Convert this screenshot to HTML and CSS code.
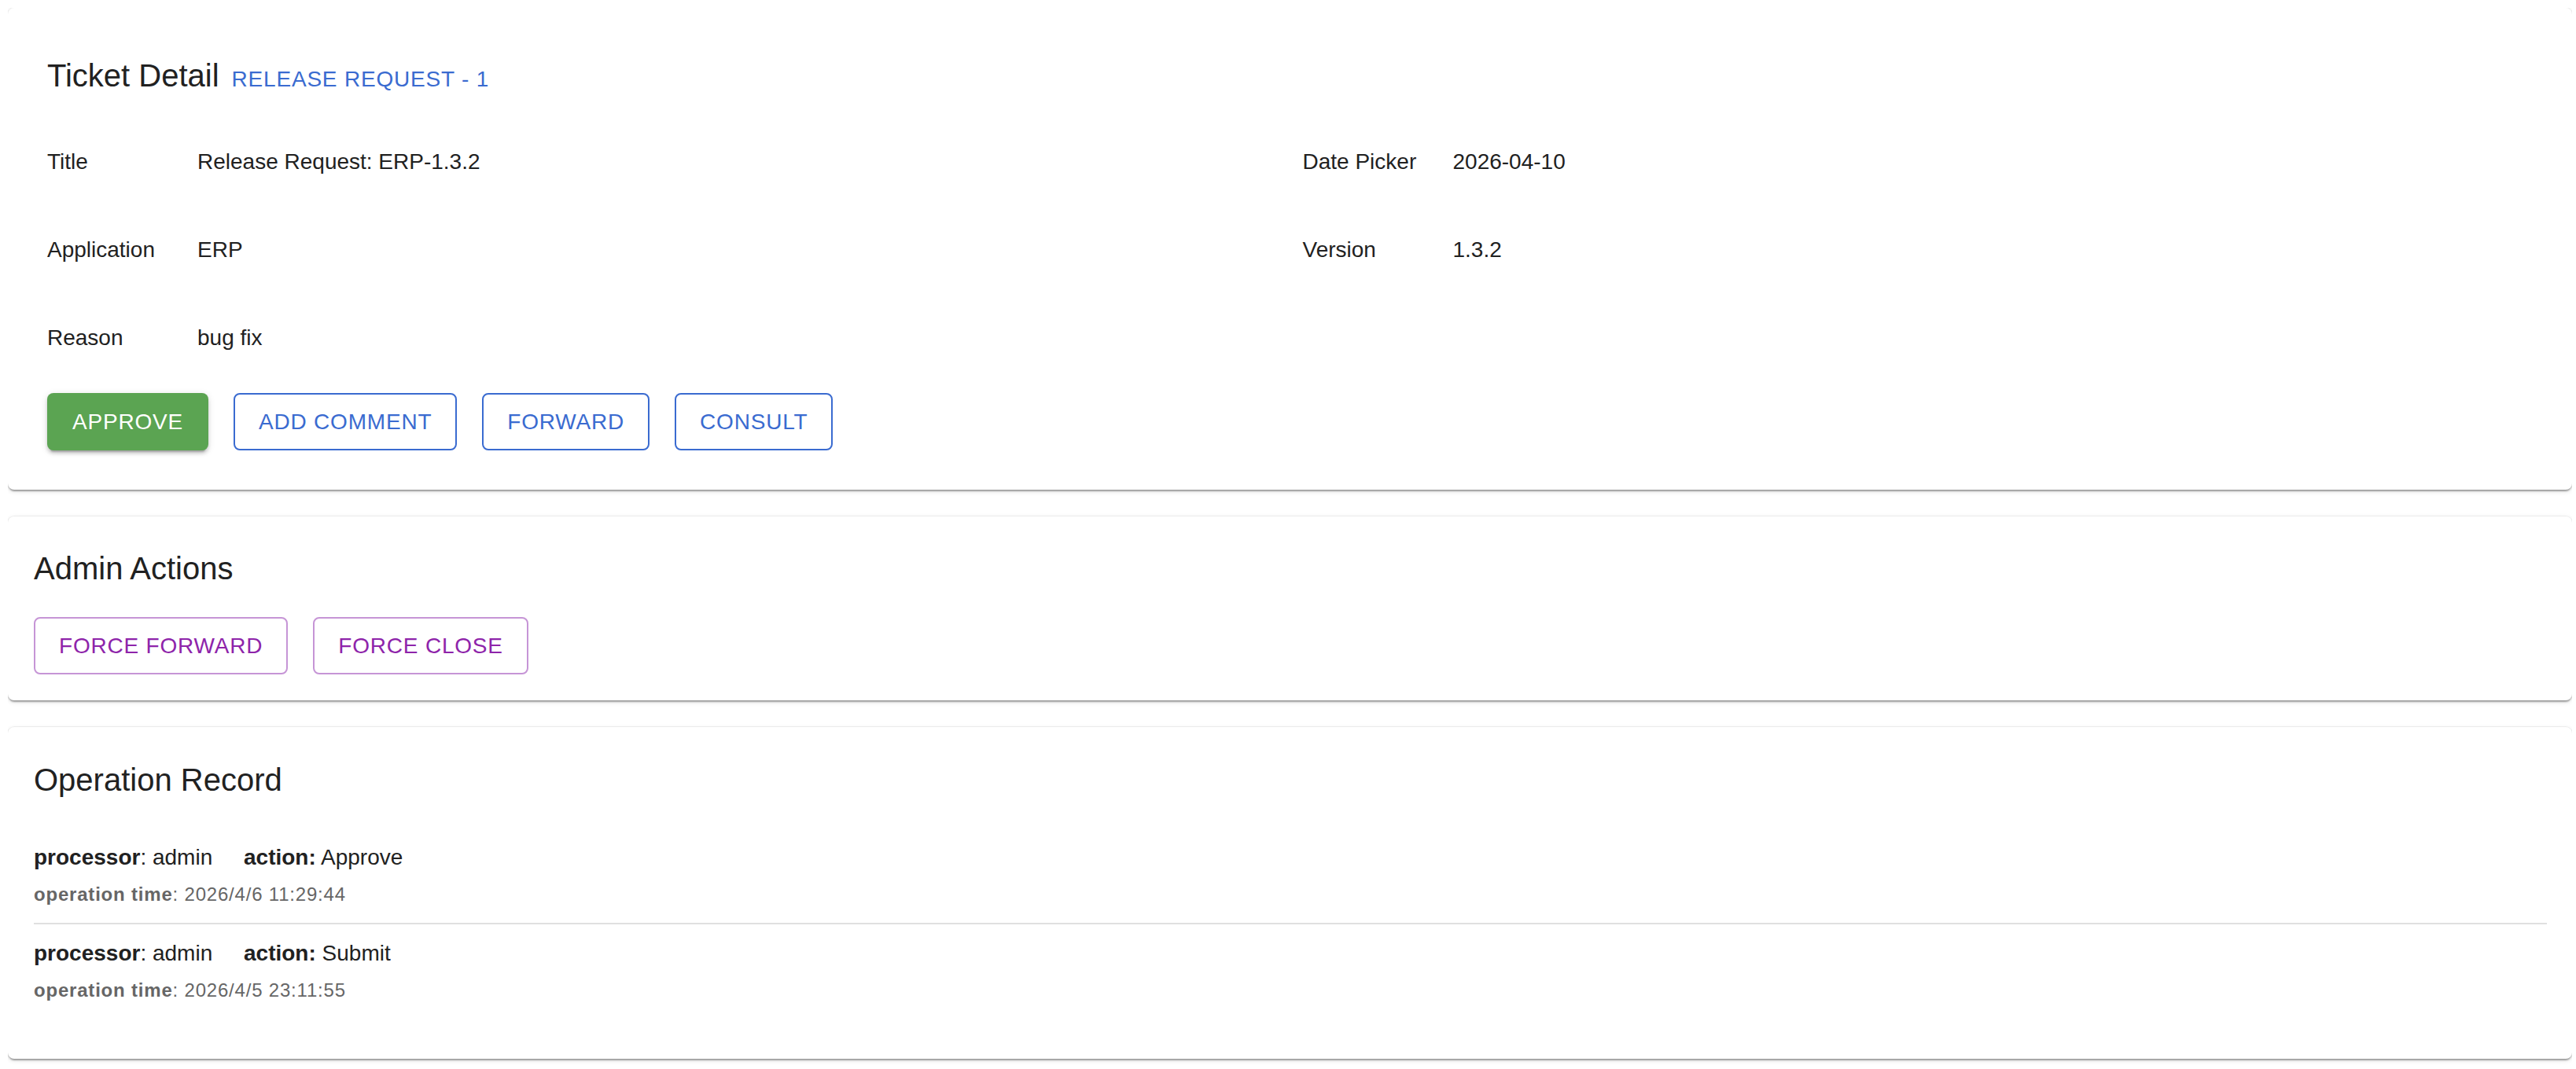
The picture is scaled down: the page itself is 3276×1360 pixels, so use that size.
FILE: index.html
```html
<!DOCTYPE html>
<html lang="en">
<head>
  <meta charset="UTF-8">
  <title>Ticket Detail</title>
  <link rel="stylesheet" href="styles.css">
</head>
<body>

<div class="card card-detail">
  <div class="card-head">
    <h2 class="card-title">Ticket Detail</h2>
    <span class="ticket-no">Release Request - 1</span>
  </div>

  <div class="field-grid">
    <div class="field">
      <span class="field-label">Title</span>
      <span class="field-value">Release Request: ERP-1.3.2</span>
    </div>
    <div class="field">
      <span class="field-label">Date Picker</span>
      <span class="field-value">2026-04-10</span>
    </div>
    <div class="field">
      <span class="field-label">Application</span>
      <span class="field-value">ERP</span>
    </div>
    <div class="field">
      <span class="field-label">Version</span>
      <span class="field-value">1.3.2</span>
    </div>
    <div class="field">
      <span class="field-label">Reason</span>
      <span class="field-value">bug fix</span>
    </div>
  </div>

  <div class="btn-row">
    <button class="btn btn-approve">Approve</button>
    <button class="btn btn-outline">Add Comment</button>
    <button class="btn btn-outline">Forward</button>
    <button class="btn btn-outline">Consult</button>
  </div>
</div>

<div class="card card-admin">
  <h2 class="card-title admin-title">Admin Actions</h2>
  <div class="btn-row">
    <button class="btn btn-outline btn-purple">Force Forward</button>
    <button class="btn btn-outline btn-purple">Force Close</button>
  </div>
</div>

<div class="card card-record">
  <h2 class="card-title record-title">Operation Record</h2>
  <ul class="record-list">
    <li class="record-item">
      <div class="record-main">
        <span><b>processor</b>: admin</span>
        <span class="record-action"><b>action:</b> Approve</span>
      </div>
      <div class="record-time"><b>operation time</b>: 2026/4/6 11:29:44</div>
    </li>
    <li class="record-divider"></li>
    <li class="record-item">
      <div class="record-main">
        <span><b>processor</b>: admin</span>
        <span class="record-action"><b>action:</b> Submit</span>
      </div>
      <div class="record-time"><b>operation time</b>: 2026/4/5 23:11:55</div>
    </li>
  </ul>
</div>

</body>
</html>
```

FILE: styles.css
```css
body {
  margin: 10px 5px 10px 10px;
  font-family: 'Liberation Sans', Arial, sans-serif;
  color: #212121;
  background-color: #fff;
}

.card {
  background-color: #fff;
  border-radius: 8px;
  box-shadow: 0 0 0 1px rgba(0, 0, 0, 0.05), 0 4px 2px -2px rgba(0, 0, 0, 0.2), 0 2px 2px 0 rgba(0, 0, 0, 0.14), 0 2px 6px 0 rgba(0, 0, 0, 0.12);
  margin-bottom: 34px;
}

.card-title {
  margin: 0;
  font-size: 40px;
  font-weight: 400;
  line-height: 64px;
  color: #212121;
}

/* ticket detail */
.card-detail {
  padding: 54px 50px 50px 50px;
}
.card-head {
  display: flex;
  align-items: baseline;
  gap: 16px;
  margin-bottom: 22px;
}
.ticket-no {
  font-size: 28px;
  letter-spacing: 0.8px;
  text-transform: uppercase;
  color: #3a6bd0;
}
.field-grid {
  display: grid;
  grid-template-columns: 1fr 1fr;
  column-gap: 32px;
}
.field {
  display: flex;
  align-items: center;
  height: 112px;
  font-size: 28px;
}
.field-label {
  width: 191px;
  flex-shrink: 0;
}

/* buttons */
.btn-row {
  display: flex;
  gap: 32px;
  margin-top: 14px;
}
.btn {
  font-family: 'Liberation Sans', Arial, sans-serif;
  font-size: 28px;
  line-height: 49px;
  letter-spacing: 0.8px;
  text-transform: uppercase;
  border-radius: 8px;
  cursor: pointer;
}
.btn-approve {
  padding: 12px 32px;
  border: none;
  background-color: #5ba452;
  color: #fff;
  box-shadow: 0 6px 2px -4px rgba(0, 0, 0, 0.2), 0 4px 4px 0 rgba(0, 0, 0, 0.14), 0 2px 10px 0 rgba(0, 0, 0, 0.12);
}
.btn-outline {
  padding: 10px 30px;
  border: 2px solid #3a6bd0;
  background-color: #fff;
  color: #3a6bd0;
}
.btn-purple {
  border-color: #c695d6;
  color: #8e24aa;
}

/* admin */
.card-admin {
  padding: 34px 32px 33px 33px;
}
.admin-title {
  margin-bottom: 30px;
}
.card-admin .btn-row {
  margin-top: 0;
}

/* operation record */
.card-record {
  padding: 35px 32px 35px 33px;
}
.record-title {
  margin-bottom: 14px;
}
.record-list {
  list-style: none;
  margin: 0;
  padding: 16px 0;
}
.record-item {
  padding: 16px 0;
}
.record-main {
  font-size: 28px;
  line-height: 42px;
}
.record-action {
  margin-left: 32px;
}
.record-time {
  margin-top: 6px;
  font-size: 24px;
  line-height: 40px;
  letter-spacing: 0.8px;
  color: #666;
}
.record-divider {
  height: 2px;
  background-color: #e0e0e0;
}
```
